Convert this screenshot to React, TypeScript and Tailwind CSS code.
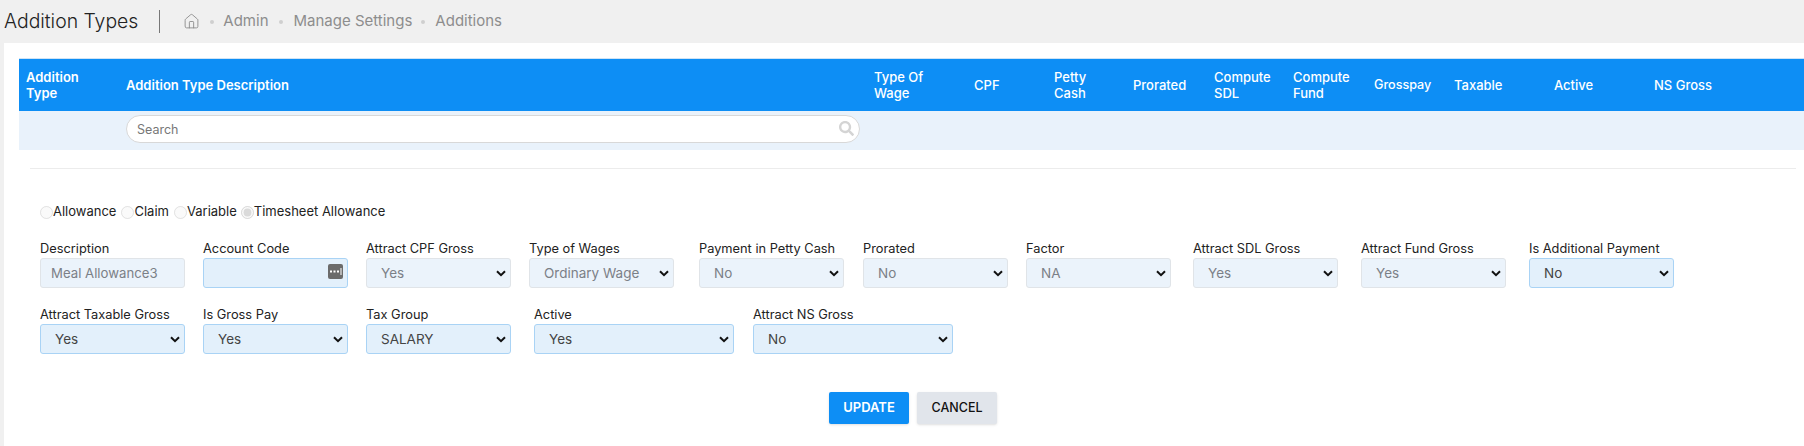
import React from 'react';
import { Home } from 'lucide-react';
import { FaSearch } from 'react-icons/fa';

const font = "font-['Inter','Liberation_Sans',sans-serif]";

const columns = [
  { label: 'Addition Type', cls: 'w-[100px] pr-[40px] font-semibold' },
  { label: 'Addition Type Description', cls: 'w-[748px] font-semibold' },
  { label: 'Type Of Wage', cls: 'w-[100px] pr-[30px] font-medium' },
  { label: 'CPF', cls: 'w-[80px] font-medium' },
  { label: 'Petty Cash', cls: 'w-[79px] pr-[30px] font-medium' },
  { label: 'Prorated', cls: 'w-[81px] font-medium' },
  { label: 'Compute SDL', cls: 'w-[79px] pr-[10px] font-medium' },
  { label: 'Compute Fund', cls: 'w-[81px] pr-[10px] font-medium' },
  { label: 'Grosspay', cls: 'w-[80px] font-medium text-[12.6px]' },
  { label: 'Taxable', cls: 'w-[100px] font-medium' },
  { label: 'Active', cls: 'w-[100px] font-medium' },
  { label: 'NS Gross', cls: 'w-[100px] font-medium' },
];

const AddonIcon = () => (
  <svg width="15" height="15" viewBox="0 0 15 15" className="absolute right-[5px] top-[6px]">
    <rect width="15" height="15" rx="2" fill="#6b6b6b" />
    <rect x="2" y="6.5" width="2" height="2" fill="#fff" />
    <rect x="5.5" y="6.5" width="2" height="2" fill="#fff" />
    <rect x="9" y="6.5" width="2" height="2" fill="#fff" />
    <rect x="12.5" y="4" width="1" height="7" fill="#fff" />
  </svg>
);

const Chevron = () => (
  <svg width="10" height="7" viewBox="0 0 10 7" className="absolute right-[5px] top-[12px] pointer-events-none">
    <path d="M1 1.2 L5 5.2 L9 1.2" fill="none" stroke="#111" strokeWidth="2" />
  </svg>
);

interface FieldProps {
  label: string;
  value?: string;
  disabled?: boolean;
  cls: string;
}

const SelectField: React.FC<FieldProps> = ({ label, value, disabled, cls }) => (
  <div className={cls}>
    <label className="block text-[12.8px] leading-[18px] text-[#222] whitespace-nowrap">{label}</label>
    <div className="relative">
      <select
        disabled={disabled}
        defaultValue={value}
        className={`appearance-none w-full h-[30px] rounded-[3px] border pl-[14px] text-[13.5px] opacity-100 ${font} ${disabled
          ? 'bg-[#ebf3fb] border-[#e0e4e8] text-[#7b8087]'
          : 'bg-[#e3f0fb] border-[#a9d3f5] text-[#444]'
          }`}
      >
        <option>{value}</option>
      </select>
      <Chevron />
    </div>
  </div>
);

const App: React.FC = () => {
  return (
    <div className={`w-[1804px] h-[446px] overflow-hidden bg-[#f0f0f0] ${font}`}>
      <div className="h-[43px] flex items-center pl-[4px]">
        <h1 className="text-[19.4px] font-light text-[#222] leading-none">Addition Types</h1>
        <div className="w-px h-[23px] bg-[#777] ml-[21px] mr-[23px]"></div>
        <Home size={17} strokeWidth={1.25} className="text-[#8a8a8a]" />
        <div className="flex items-center text-[15px] text-[#8d8d8d]">
          <span className="w-[4px] h-[4px] rounded-full bg-[#cfcfcf] ml-[10px] mr-[9px]"></span>
          <span>Admin</span>
          <span className="w-[4px] h-[4px] rounded-full bg-[#cfcfcf] ml-[10px] mr-[11px]"></span>
          <span>Manage Settings</span>
          <span className="w-[4px] h-[4px] rounded-full bg-[#cfcfcf] ml-[9px] mr-[10px]"></span>
          <span>Additions</span>
        </div>
      </div>

      <div className="ml-[4px] h-[403px] bg-white pt-[15px]">
        <div className="ml-[15px]">
          <div className="h-[53px] bg-[#0d8ef5] flex items-center pl-[7px] text-white text-[13px] leading-[16px] border-t border-[#cfe3f5]">
            {columns.map(c => (
              <div key={c.label} className={`${c.cls} shrink-0`}>{c.label}</div>
            ))}
          </div>
          <div className="h-[39px] bg-[#e9f2fb] pl-[107px] pt-[4px]">
            <div className="relative w-[734px] h-[28px]">
              <input
                placeholder="Search"
                className="w-full h-full rounded-full bg-white border border-[#d8d8d8] pl-[10px] pr-[30px] text-[12.5px] placeholder:text-[#777]"
              />
              <FaSearch size={15} className="absolute right-[6px] top-[6px] text-[#d4d4d4]" />
            </div>
          </div>
        </div>

        <div className="ml-[26px] mr-[8px] mt-[18px] border-t border-[#ececec]"></div>

        <div className="pl-[36px] pt-[35px]">
          <div className="flex items-center h-[16px] text-[13px] text-[#222] whitespace-nowrap">
            <input type="radio" disabled name="kind" className="w-[13px] h-[13px] m-0 opacity-60" />
            <span>Allowance</span>
            <input type="radio" disabled name="kind" className="w-[13px] h-[13px] m-0 ml-[5px] opacity-60" />
            <span>Claim</span>
            <input type="radio" disabled name="kind" className="w-[13px] h-[13px] m-0 ml-[5px] opacity-60" />
            <span>Variable</span>
            <input type="radio" disabled defaultChecked name="kind" className="w-[13px] h-[13px] m-0 ml-[4px] opacity-80" />
            <span>Timesheet Allowance</span>
          </div>

          <div className="flex mt-[20px]">
            <div className="w-[145px]">
              <label className="block text-[12.8px] leading-[18px] text-[#222]">Description</label>
              <input
                disabled
                defaultValue="Meal Allowance3"
                className="w-full h-[30px] rounded-[3px] border bg-[#ebf3fb] border-[#e0e4e8] pl-[10px] text-[13.2px] text-[#7b8087]"
              />
            </div>
            <div className="w-[145px] ml-[18px]">
              <label className="block text-[12.8px] leading-[18px] text-[#222]">Account Code</label>
              <div className="relative">
                <input className="w-full h-[30px] rounded-[3px] border bg-[#e3f0fb] border-[#a9d3f5] pl-[10px] text-[13px]" />
                <AddonIcon />
              </div>
            </div>
            <SelectField label="Attract CPF Gross" value="Yes" disabled cls="w-[145px] ml-[18px]" />
            <SelectField label="Type of Wages" value="Ordinary Wage" disabled cls="w-[145px] ml-[18px]" />
            <SelectField label="Payment in Petty Cash" value="No" disabled cls="w-[145px] ml-[25px]" />
            <SelectField label="Prorated" value="No" disabled cls="w-[145px] ml-[19px]" />
            <SelectField label="Factor" value="NA" disabled cls="w-[145px] ml-[18px]" />
            <SelectField label="Attract SDL Gross" value="Yes" disabled cls="w-[145px] ml-[22px]" />
            <SelectField label="Attract Fund Gross" value="Yes" disabled cls="w-[145px] ml-[23px]" />
            <SelectField label="Is Additional Payment" value="No" cls="w-[145px] ml-[23px]" />
          </div>

          <div className="flex mt-[18px]">
            <SelectField label="Attract Taxable Gross" value="Yes" cls="w-[145px]" />
            <SelectField label="Is Gross Pay" value="Yes" cls="w-[145px] ml-[18px]" />
            <SelectField label="Tax Group" value="SALARY" cls="w-[145px] ml-[18px]" />
            <SelectField label="Active" value="Yes" cls="w-[200px] ml-[23px]" />
            <SelectField label="Attract NS Gross" value="No" cls="w-[200px] ml-[19px]" />
          </div>

          <div className="flex justify-center gap-[8px] mt-[38px] pl-[1px] w-[1745px]">
            <button className="w-[80px] h-[32px] rounded-[2px] bg-[#0d8ef5] text-white text-[13px] font-semibold shadow-sm">UPDATE</button>
            <button className="w-[80px] h-[32px] rounded-[2px] bg-[#e1e5eb] text-[#111] text-[12.5px] font-medium shadow-sm">CANCEL</button>
          </div>
        </div>
      </div>
    </div>
  );
};

export default App;
